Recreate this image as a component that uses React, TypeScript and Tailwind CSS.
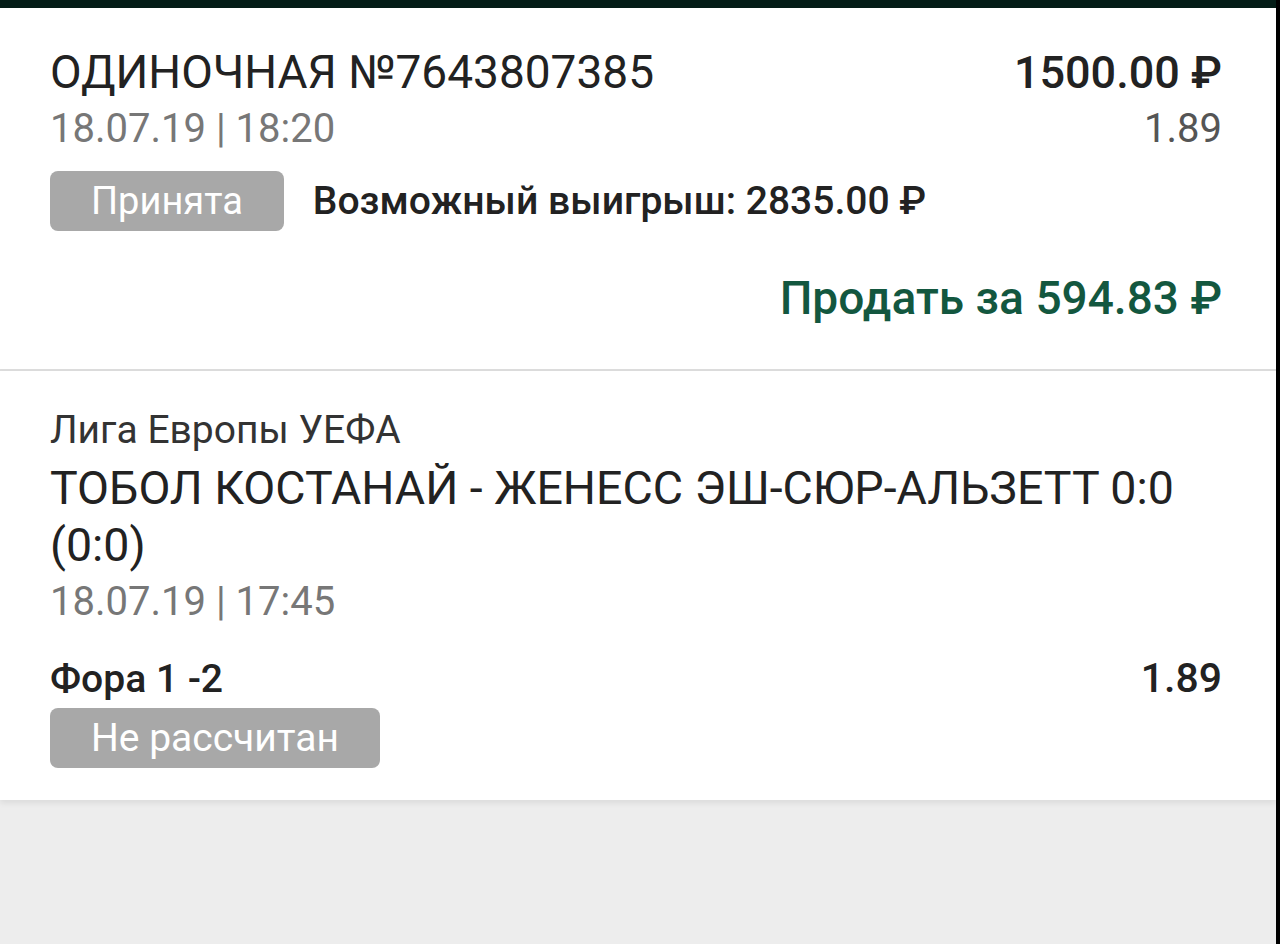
export default function App() {
  return (
    <div className="flex min-h-[944px] w-full bg-black font-['Roboto',sans-serif]">
      <div className="flex w-[1276px] flex-col bg-[#ededed]">
        <div className="h-[8px] bg-[#041d17]" />

        {/* ticket header */}
        <div className="border-b-2 border-[#dddddd] bg-white pl-[50px] pr-[54px] pt-[38px] pb-[47px]">
          <div className="flex items-baseline justify-between">
            <span className="text-[46px] leading-[52px] text-[#222222]">ОДИНОЧНАЯ №7643807385</span>
            <span className="font-['Roboto_Medium','Roboto',sans-serif] text-[45px] leading-[52px] font-medium text-[#222222]">1500.00 ₽</span>
          </div>
          <div className="mt-[6px] flex items-baseline justify-between">
            <span className="text-[40px] leading-[48px] text-[#777777]">18.07.19 | 18:20</span>
            <span className="text-[40px] leading-[48px] text-[#555555]">1.89</span>
          </div>
          <div className="mt-[18px] flex items-center gap-[29px]">
            <span className="flex h-[60px] items-center rounded-lg bg-[#a8a8a8] px-[41px] text-[38px] text-white">Принята</span>
            <span className="font-['Roboto_Medium','Roboto',sans-serif] text-[39px] font-medium text-[#222222]">Возможный выигрыш: 2835.00 ₽</span>
          </div>
          <div className="mt-[43px] flex justify-end">
            <span className="font-['Roboto_Medium','Roboto',sans-serif] text-[46px] leading-[48px] font-medium text-[#13573f]">Продать за 594.83 ₽</span>
          </div>
        </div>

        {/* event */}
        <div className="bg-white pl-[50px] pr-[54px] pt-[35px] pb-[32px] shadow-[0_3px_6px_rgba(0,0,0,0.08)]">
          <div className="text-[39px] leading-[48px] text-[#333333]">Лига Европы УЕФА</div>
          <div className="mt-[6px] text-[46.5px] leading-[57px] text-[#222222]">
            ТОБОЛ КОСТАНАЙ - ЖЕНЕСС ЭШ-СЮР-АЛЬЗЕТТ 0:0 (0:0)
          </div>
          <div className="mt-[4px] text-[40px] leading-[48px] text-[#777777]">18.07.19 | 17:45</div>
          <div className="mt-[28px] flex items-baseline justify-between">
            <span className="font-['Roboto_Medium','Roboto',sans-serif] text-[39px] leading-[48px] font-medium text-[#222222]">Фора 1 -2</span>
            <span className="font-['Roboto_Medium','Roboto',sans-serif] text-[41px] leading-[48px] font-medium text-[#222222]">1.89</span>
          </div>
          <div className="mt-[5px] flex">
            <span className="flex h-[60px] items-center rounded-lg bg-[#a8a8a8] px-[41px] text-[39px] text-white">Не рассчитан</span>
          </div>
        </div>

        <div className="flex-1" />
      </div>
      <div className="w-[4px] bg-black" />
    </div>
  );
}
